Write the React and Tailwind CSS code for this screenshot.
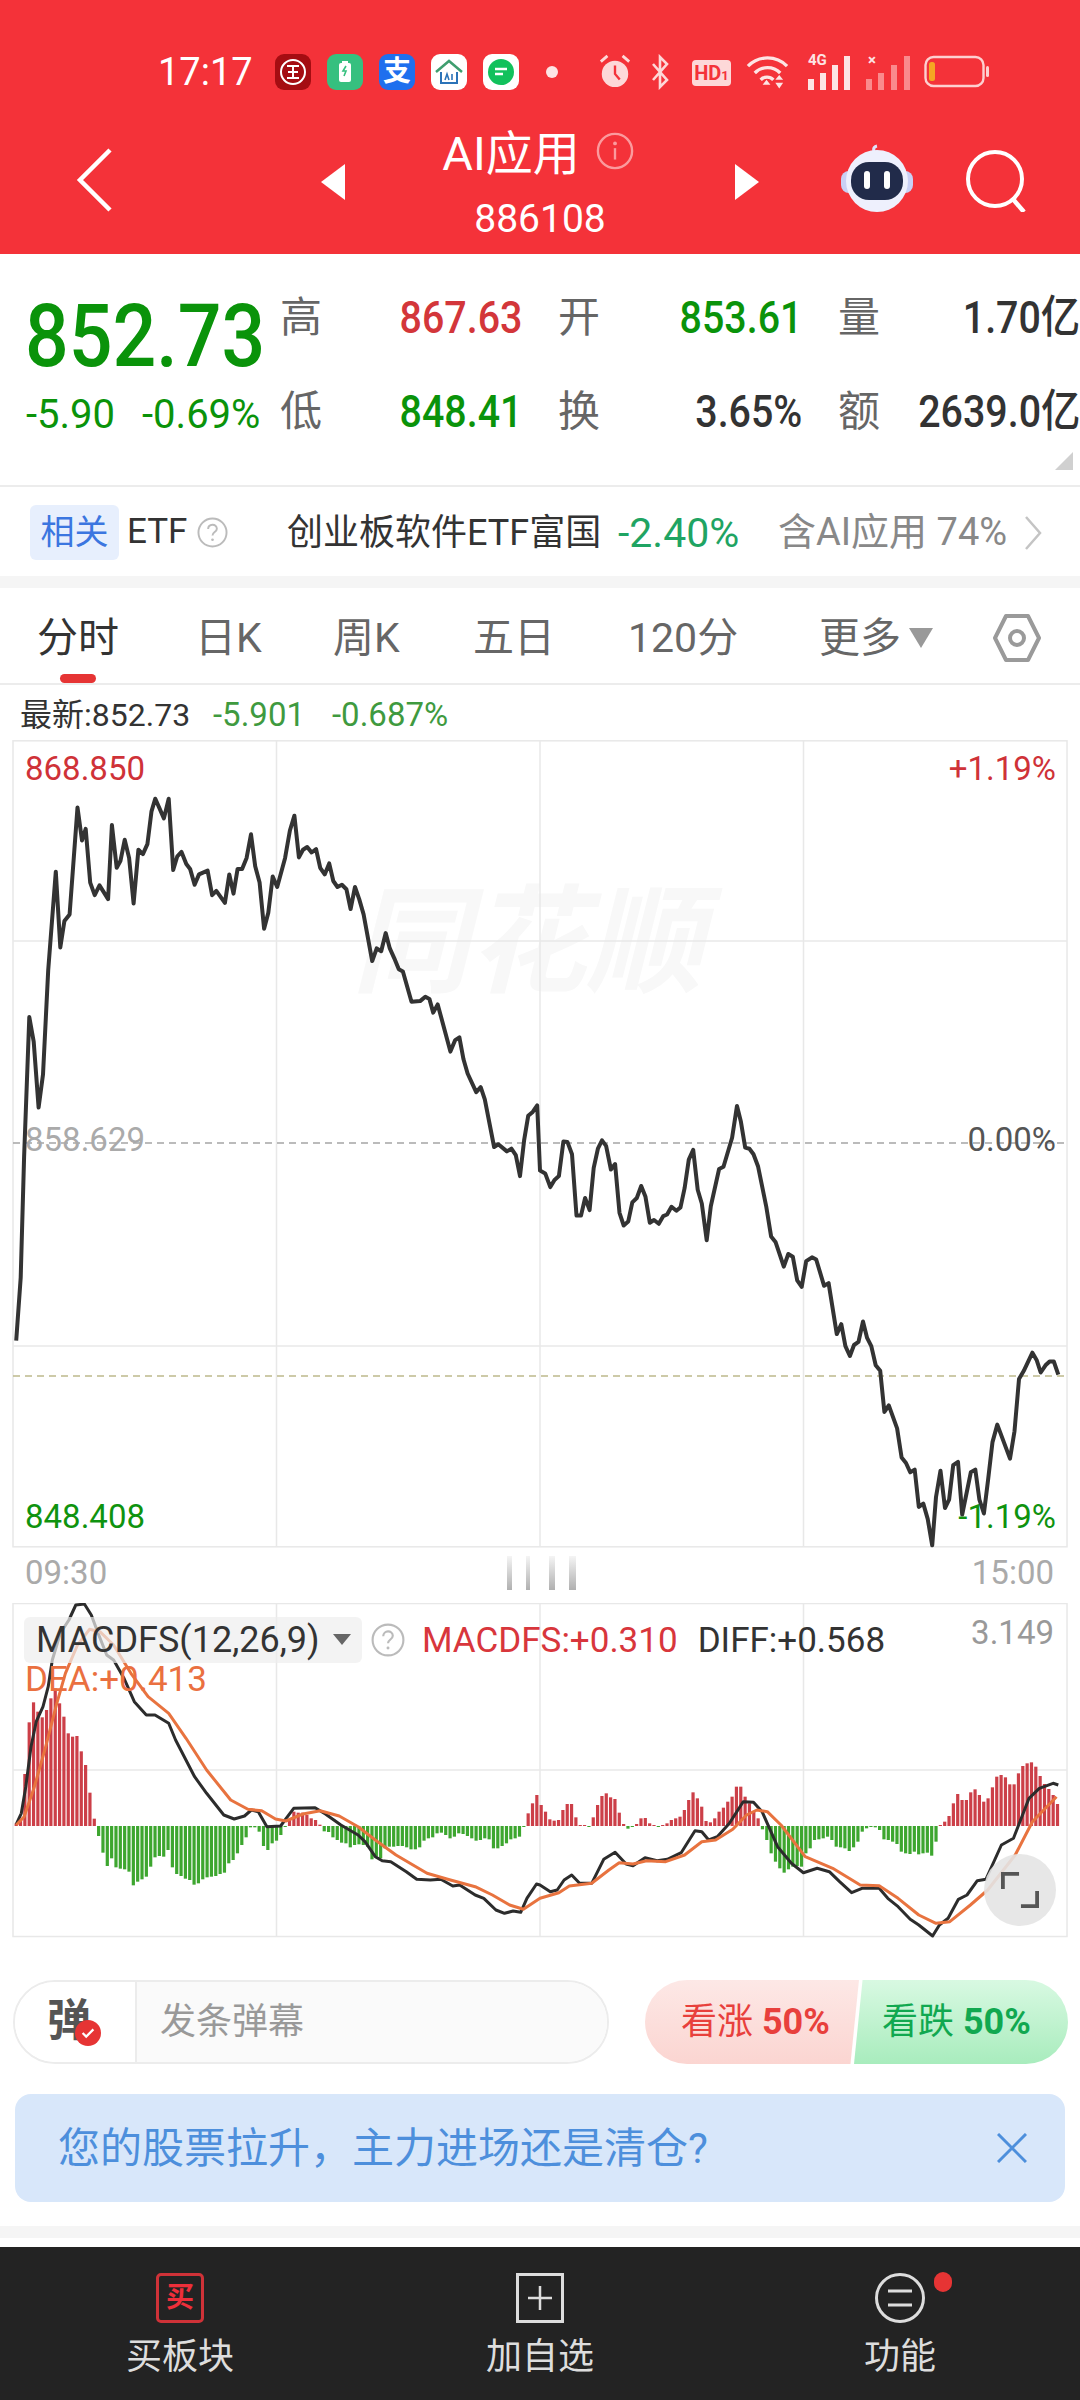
import React from "react";

const FONT = "font-['Roboto','Noto_Sans_CJK_SC',sans-serif]";

const L3 = [[47,1095],[60,980],[70,760],[85,505],[98,550],[112,670],[125,610],[140,420],[162,240],[175,378],[187,330],[202,318],[225,123],[238,183],[249,162],[262,260],[275,283],[289,265],[314,290],[325,155],[339,233],[350,220],[362,182],[375,215],[388,298],[402,200],[415,208],[428,190],[440,130],[451,107],[476,143],[490,107],[503,237],[515,212],[527,204],[541,226],[552,235],[565,264],[578,245],[603,238],[616,283],[628,275],[653,297],[666,245],[678,280],[690,235],[703,235],[716,215],[729,172],[741,230],[754,260],[767,344],[779,315],[792,249],[805,268],[828,215],[842,165],[855,138],[868,214],[880,200],[892,195],[905,205],[918,199],[930,233],[943,245],[956,225],[968,257],[980,268],[993,264],[1006,272],[1018,308],[1031,268],[1043,290],[1056,318],[1081,403],[1094,380],[1107,385],[1120,352],[1132,380],[1145,398],[1158,418],[1170,422],[1195,477],[1220,476],[1235,468],[1247,472],[1258,497],[1271,482],[1308,568],[1322,547],[1334,542],[1346,582],[1358,608],[1383,642],[1396,633],[1408,655],[1435,742],[1447,737],[1472,750],[1485,745],[1498,757],[1510,795],[1522,730],[1534,685],[1547,678],[1560,666]];
const L4 = [[0,785],[15,790],[30,815],[42,802],[55,795],[68,732],[80,733],[93,755],[106,867],[119,867],[131,835],[144,857],[156,780],[168,745],[180,730],[192,740],[206,783],[218,773],[231,862],[243,885],[256,878],[268,843],[281,835],[294,813],[306,832],[319,880],[331,875],[345,882],[358,868],[369,865],[382,851],[396,858],[408,852],[420,817],[432,765],[445,747],[458,820],[470,845],[484,912],[496,850],[520,782],[533,778],[558,725],[572,667],[583,695],[596,743],[608,745],[620,755],[633,777],[657,850],[671,905],[684,915],[708,960],[721,937],[734,942],[747,985],[760,997],[773,950],[790,943],[802,947],[825,995],[838,990],[862,1083],[875,1065],[887,1105],[900,1123],[912,1103],[925,1097],[938,1060],[950,1090],[962,1105],[975,1140],[988,1150],[1000,1225],[1013,1213],[1037,1255],[1050,1308],[1063,1318],[1075,1335],[1088,1330],[1100,1398],[1113,1392],[1126,1420],[1139,1468],[1150,1380],[1163,1332],[1176,1400],[1188,1385],[1200,1322],[1214,1316],[1226,1412],[1251,1335],[1264,1330],[1276,1385],[1289,1410],[1301,1350],[1314,1280],[1328,1248],[1365,1310],[1378,1260],[1391,1165],[1405,1150],[1430,1117],[1442,1130],[1454,1153],[1468,1140],[1480,1133],[1492,1133],[1505,1157]];
const K = 2.904;
const KY = 1.823;
const pricePts = [...L3.map(([x,y])=>[x/K,740+y/KY]),...L4.map(([x,y])=>[540+x/K,740+y/KY])].map(p=>p[0].toFixed(1)+","+p[1].toFixed(1)).join(" ");

const B5 = [[47,703],[62,670],[75,590],[90,470],[105,395],[125,350],[140,290],[152,210],[175,130],[200,90],[220,45],[245,42],[265,75],[285,130],[310,195],[330,210],[360,265],[390,335],[425,375],[450,375],[490,400],[510,450],[565,560],[600,610],[650,675],[680,687],[710,678],[730,660],[750,665],[775,710],[815,708],[835,680],[853,655],[915,653],[945,672],[990,705],[1040,735],[1060,755],[1090,800],[1110,812],[1135,815],[1180,845],[1210,868],[1250,870],[1280,868],[1315,888],[1335,885],[1380,915],[1405,925],[1440,960],[1465,970],[1490,963],[1512,967],[1530,925],[1558,882]];
const B6 = [[0,885],[30,905],[50,900],[70,870],[92,855],[115,880],[150,880],[185,808],[218,787],[250,822],[270,827],[305,803],[340,812],[370,808],[410,788],[450,722],[470,725],[490,750],[515,740],[550,700],[590,635],[620,637],[645,665],[690,770],[730,820],[765,848],[805,835],[840,845],[870,875],[905,908],[935,895],[985,895],[1010,925],[1040,950],[1075,988],[1100,1005],[1140,1038],[1160,1005],[1185,985],[1215,928],[1240,915],[1270,872],[1295,868],[1340,765],[1375,745],[1420,625],[1450,595],[1490,580],[1505,585]];
const O5 = [[47,705],[70,680],[100,590],[130,480],[165,340],[190,250],[225,165],[260,118],[290,125],[330,165],[380,250],[430,320],[490,370],[540,445],[600,540],[670,630],[720,658],[760,662],[800,687],[830,693],[880,672],[930,662],[985,678],[1040,710],[1090,750],[1150,795],[1240,850],[1300,868],[1380,890],[1430,915],[1480,945],[1520,958]];
const O6 = [[0,925],[55,908],[85,888],[150,880],[200,840],[230,818],[270,822],[310,812],[365,815],[420,795],[470,755],[510,750],[560,718],[600,675],[630,660],[660,665],[700,705],[770,800],[850,835],[930,885],[985,887],[1040,925],[1100,975],[1150,1000],[1190,995],[1250,945],[1300,900],[1380,795],[1430,695],[1500,620]];
const mac = (a,b)=>[...a.map(([x,y])=>[x/K,1590+y/3]),...b.map(([x,y])=>[540+x/K,1590+y/3])].map(p=>p[0].toFixed(1)+","+p[1].toFixed(1)).join(" ");

const TOPS = [700,690,552,397,337,365,382,360,325,295,340,380,430,440,438,484,525,608,686,738,788,828,805,832,836,838,845,886,875,868,860,830,802,798,800,780,832,852,858,866,870,884,880,868,862,860,858,852,848,820,810,790,765,742,712,712,725,768,780,760,752,735,710,690,665,668,668,675,685,690,704,724,726,742,750,758,760,772,765,763,765,770,808,800,805,775,770,770,768,768,772,778,778,772,752,745,742,730,728,735,745,740,730,732,738,745,752,750,745,748,775,775,768,760,748,745,740,710,670,640,615,645,665,688,692,690,660,642,642,682,706,706,709,682,645,618,610,622,627,668,702,716,710,702,685,684,700,705,709,706,700,690,685,680,660,630,607,625,650,693,697,685,665,653,635,620,590,590,620,640,665,685,718,750,790,815,835,848,838,830,828,830,790,775,750,748,745,740,750,770,772,775,783,772,755,725,715,710,712,720,748,750,755,762,785,790,792,785,793,790,788,797,755,705,695,678,640,612,630,630,607,598,615,635,625,592,560,555,562,583,583,550,528,520,517,530,558,582,597,615,642];

function PriceChart() {
  const vx = [276.5, 540, 803.5];
  return (
    <svg viewBox="0 740 1080 808" className="relative w-full h-full block">
      <rect x="13" y="740.8" width="1054" height="806" fill="none" stroke="#e8e8e8" strokeWidth="1.5" />
      {vx.map(x => <line key={x} x1={x} x2={x} y1="740" y2="1547" stroke="#e8e8e8" strokeWidth="1.5" />)}
      {[941, 1346].map(y => <line key={y} x1="13" x2="1067" y1={y} y2={y} stroke="#e8e8e8" strokeWidth="1.5" />)}
      <line x1="13" x2="1067" y1="1143" y2="1143" stroke="#a5a5a5" strokeWidth="1.5" strokeDasharray="7 5" />
      <line x1="13" x2="1067" y1="1376" y2="1376" stroke="#bdb98c" strokeWidth="1.5" strokeDasharray="7 5" />
      <polyline points={pricePts} fill="none" stroke="#333333" strokeWidth="4" strokeLinejoin="round" />
    </svg>
  );
}

function MacdChart() {
  const vx = [276.5, 540, 803.5];
  return (
    <svg viewBox="0 1603 1080 335" className="w-full h-full block">
      <rect x="13" y="1603.5" width="1054" height="333" fill="none" stroke="#e8e8e8" strokeWidth="1.5" />
      {vx.map(x => <line key={x} x1={x} x2={x} y1="1603" y2="1937" stroke="#e8e8e8" strokeWidth="1.5" />)}
      <line x1="13" x2="1067" y1="1770" y2="1770" stroke="#e8e8e8" strokeWidth="1.5" />
      {TOPS.map((t, i) => {
        const x = (47 + 12.6 * i) / K;
        const h = Math.max(Math.abs(t - 708) / 3, 1);
        const up = t < 708;
        return <rect key={i} x={x - 1.6} y={up ? 1826 - h : 1826} width="3.2" height={h} fill={up ? "#cc3f48" : "#3da62f"} />;
      })}
      <polyline points={mac(B5, B6)} fill="none" stroke="#2c2c2c" strokeWidth="3" strokeLinejoin="round" />
      <polyline points={mac(O5, O6)} fill="none" stroke="#e8733f" strokeWidth="3" strokeLinejoin="round" />
    </svg>
  );
}

function AppIcon({ cls, children }) {
  return <div className={"w-[36px] h-[36px] rounded-[9px] flex items-center justify-center overflow-hidden shrink-0 " + cls}>{children}</div>;
}

function StatusBar() {
  return (
    <div className="h-[144px] pt-[54px] pl-[158px] flex items-start text-white">
      <div className="w-[94px] h-[36px] text-[38px] leading-[36px] whitespace-nowrap">17:17</div>
      <div className="ml-[23px] flex gap-[16px]">
        <AppIcon cls="bg-[#a50d12]">
          <svg viewBox="0 0 36 36" className="w-[36px] h-[36px]"><circle cx="18" cy="18" r="12" fill="none" stroke="#fff" strokeWidth="2" /><path d="M12 12h12M18 12v12M12 24h12M13 18h10" stroke="#fff" strokeWidth="2" fill="none" /></svg>
        </AppIcon>
        <AppIcon cls="bg-[#36c07f]">
          <svg viewBox="0 0 36 36" className="w-[36px] h-[36px]"><rect x="12" y="9" width="12" height="19" rx="2" fill="#fff" /><rect x="15" y="7" width="6" height="3" fill="#fff" /><path d="M19 12l-3 5h3l-2 5" stroke="#36c07f" strokeWidth="1.6" fill="none" /></svg>
        </AppIcon>
        <AppIcon cls="bg-[#1f6fee] text-white text-[28px] leading-none font-bold">支</AppIcon>
        <AppIcon cls="bg-white">
          <svg viewBox="0 0 36 36" className="w-[36px] h-[36px]"><path d="M5 18L18 7l13 11" fill="none" stroke="#3f9e6f" strokeWidth="2.5" /><path d="M10 18v11h16V18" fill="none" stroke="#2b73b8" strokeWidth="2" /><path d="M14 26l2-6 2 6M21 20v6" fill="none" stroke="#2b73b8" strokeWidth="1.6" /></svg>
        </AppIcon>
        <AppIcon cls="bg-white">
          <svg viewBox="0 0 36 36" className="w-[36px] h-[36px]"><circle cx="18" cy="18" r="13" fill="#12c15c" /><path d="M12 15h12M12 20h8" stroke="#fff" strokeWidth="2.4" /></svg>
        </AppIcon>
      </div>
      <div className="ml-[27px] mt-[12px] w-[12px] h-[12px] rounded-full bg-[#fde4e4]" />
      <svg viewBox="0 0 36 40" className="ml-[40px] w-[34px] h-[38px] -mt-[1px] text-[#fdd8d8]">
        <circle cx="18" cy="22" r="14" fill="currentColor" />
        <path d="M18 13v9l5 6" stroke="#f43239" strokeWidth="2.5" fill="none" />
        <path d="M3 9l7-6M33 9l-7-6" stroke="currentColor" strokeWidth="3" />
      </svg>
      <svg viewBox="0 0 20 36" className="ml-[18px] w-[20px] h-[36px] mt-[0px]">
        <path d="M3 10l14 16-7 7V3l7 7L3 26" fill="none" stroke="#fdd8d8" strokeWidth="2.6" />
      </svg>
      <div className="ml-[22px] mt-[6px] w-[39px] h-[26px] rounded-[4px] bg-[#fdd8d8] text-[#f43239] text-[20px] leading-[26px] font-bold text-center overflow-hidden">HD<span className="text-[13px]">1</span></div>
      <svg viewBox="0 0 44 36" className="ml-[15px] w-[43px] h-[36px]">
        <path d="M2 12a28 28 0 0 1 40 0M9 19a18 18 0 0 1 26 0M15 26a9 9 0 0 1 13 0" fill="none" stroke="#fde4e4" strokeWidth="3.4" />
        <path d="M17 31h8l-4-5zM30 26h8l-4-5zM30 29h8l-4 6z" fill="#fde4e4" />
      </svg>
      <div className="ml-[19px] relative w-[43px] h-[36px] text-[#fde4e4]">
        <span className="absolute left-0 -top-[1px] text-[15px] leading-[15px] font-bold">4G</span>
        <svg viewBox="0 0 43 36" className="w-[43px] h-[36px]">
          <rect x="0" y="25" width="6" height="11" fill="currentColor" /><rect x="12" y="19" width="6" height="17" fill="currentColor" /><rect x="24" y="11" width="6" height="25" fill="currentColor" /><rect x="36" y="2" width="6" height="34" fill="currentColor" />
        </svg>
      </div>
      <div className="ml-[15px] relative w-[44px] h-[36px]">
        <span className="absolute left-[2px] -top-[1px] text-[15px] leading-[15px] font-bold text-[#fde4e4]">×</span>
        <svg viewBox="0 0 44 36" className="w-[44px] h-[36px]">
          <rect x="0" y="25" width="6" height="11" fill="#fa8a8d" /><rect x="12" y="19" width="6" height="17" fill="#fa8a8d" /><rect x="25" y="11" width="6" height="25" fill="#fa8a8d" /><rect x="38" y="2" width="6" height="34" fill="#fa8a8d" />
        </svg>
      </div>
      <svg viewBox="0 0 66 34" className="ml-[14px] mt-[1px] w-[66px] h-[34px]">
        <rect x="1.5" y="2" width="58" height="29" rx="8" fill="none" stroke="#fdd0d0" strokeWidth="2.4" />
        <rect x="5" y="7" width="6" height="19" rx="2.5" fill="#f5a623" />
        <rect x="62" y="11" width="3" height="11" rx="1.5" fill="#fdd0d0" />
      </svg>
    </div>
  );
}

function NavRow() {
  return (
    <div className="h-[110px] flex text-white">
      <svg viewBox="0 0 36 64" className="ml-[76px] mt-[4px] w-[36px] h-[64px]">
        <path d="M34 2L4 32l30 30" fill="none" stroke="#fff" strokeWidth="4.5" />
      </svg>
      <svg viewBox="0 0 24 36" className="ml-[209px] mt-[20px] w-[24px] h-[36px]"><path d="M24 0v36L0 18z" fill="#fff" /></svg>
      <div className="w-[390px] flex flex-col items-center -mt-[17px]">
        <div className="flex items-center h-[54px] -ml-[4px]">
          <span className="text-[47px] leading-[54px]">AI应用</span>
          <svg viewBox="0 0 40 40" className="ml-[16px] -mt-[6px] w-[38px] h-[38px]">
            <circle cx="20" cy="20" r="18" fill="none" stroke="#fb9a9d" strokeWidth="2.5" />
            <circle cx="20" cy="12" r="2" fill="#fb9a9d" /><path d="M20 17v12" stroke="#fb9a9d" strokeWidth="2.5" />
          </svg>
        </div>
        <span className="mt-[18px] text-[39px] leading-[40px]">886108</span>
      </div>
      <svg viewBox="0 0 24 36" className="mt-[20px] w-[24px] h-[36px]"><path d="M0 0v36l24-18z" fill="#fff" /></svg>
      <svg viewBox="0 0 74 70" className="ml-[81px] -mt-[1px] w-[74px] h-[70px]">
        <path d="M37 12c-4-2-5-8 0-9" fill="none" stroke="#dfe3fa" strokeWidth="3" />
        <rect x="1" y="28" width="72" height="22" rx="8" fill="#c9d0f5" />
        <ellipse cx="37" cy="38" rx="31" ry="31" fill="#eef0fd" />
        <rect x="11" y="19" width="52" height="38" rx="18" fill="#212b4a" />
        <rect x="24" y="28" width="6" height="18" rx="3" fill="#fff" />
        <rect x="44" y="28" width="6" height="18" rx="3" fill="#fff" />
      </svg>
      <svg viewBox="0 0 62 62" className="ml-[52px] mt-[6px] w-[62px] h-[62px]">
        <circle cx="29" cy="29" r="27" fill="none" stroke="#fff" strokeWidth="4" />
        <path d="M46 48l12 14" stroke="#fff" strokeWidth="4.5" fill="none" />
      </svg>
    </div>
  );
}

function Cond({ cls = "", origin = "origin-right", children }) {
  return <span className={"inline-block whitespace-nowrap scale-x-[.875] " + origin + " " + cls}>{children}</span>;
}

function Cell({ label, value, color }) {
  return (
    <div className="flex items-center justify-between h-[94px]">
      <span className="text-[42px] leading-[50px] text-[#666666]">{label}</span>
      <Cond cls={"text-[45px] leading-[50px] font-medium -mr-[2px] " + color}>{value}</Cond>
    </div>
  );
}

function Quote() {
  return (
    <div className="h-[231px] flex relative">
      <div className="w-[280px] pl-[25px] pt-[38px]">
        <div className="h-[88px]"><Cond origin="origin-left" cls="text-[88px] leading-[88px] font-medium text-[#0a930a]">852.73</Cond></div>
        <div className="mt-[13px] flex text-[40px] leading-[44px] text-[#0a930a]">
          <span className="ml-[1px]">-5.90</span>
          <span className="ml-[27px]">-0.69%</span>
        </div>
      </div>
      <div className="pt-[17px] grid grid-cols-[240px_242px_240px] gap-x-[38px] content-start">
        <Cell label="高" value="867.63" color="text-[#d3363a]" />
        <Cell label="开" value="853.61" color="text-[#0a930a]" />
        <Cell label="量" value="1.70亿" color="text-[#333333]" />
        <Cell label="低" value="848.41" color="text-[#0a930a]" />
        <Cell label="换" value="3.65%" color="text-[#333333]" />
        <Cell label="额" value="2639.0亿" color="text-[#333333]" />
      </div>
      <div className="absolute right-[7px] bottom-[15px] w-0 h-0 border-l-[18px] border-l-transparent border-b-[18px] border-b-[#d0d0d0]" />
    </div>
  );
}

function HelpIcon({ size, cls = "" }) {
  return (
    <svg viewBox="0 0 32 32" className={cls} style={{ width: size, height: size }}>
      <circle cx="16" cy="16" r="14.5" fill="none" stroke="#bbbbbb" strokeWidth="2" />
      <path d="M11.5 12.5c0-6 9-6 9-.5 0 3.500-4.500 3.500-4.500 7" fill="none" stroke="#bbbbbb" strokeWidth="2" />
      <circle cx="16" cy="23.500" r="1.400" fill="#bbbbbb" />
    </svg>
  );
}

function EtfRow() {
  return (
    <div className="h-[91px] border-t-[2px] border-[#ececec] flex items-center pl-[30px] pt-[2px] whitespace-nowrap">
      <div className="w-[89px] h-[55px] rounded-[6px] bg-[#e7effd] text-[#3b76e0] text-[34px] leading-[55px] text-center">相关</div>
      <span className="ml-[8px] w-[59px] text-[35px] text-[#333333]">ETF</span>
      <HelpIcon size={31} cls="ml-[11px]" />
      <span className="ml-[59px] w-[331px] text-[36px] text-[#333333]">创业板软件ETF富国</span>
      <span className="w-[160px] text-[41px] leading-[48px] text-[#1fa463]">-2.40%</span>
      <span className="w-[246px] text-[38px] text-[#888888]">含AI应用 74%</span>
      <svg viewBox="0 0 18 36" className="w-[18px] h-[36px]"><path d="M2 2l14 16L2 34" fill="none" stroke="#c4c4c4" strokeWidth="2.5" /></svg>
    </div>
  );
}

function Tabs() {
  return (
    <div className="h-[97px] border-b-[2px] border-[#ececec] relative flex items-center text-[41px] leading-[48px] text-[#666666] whitespace-nowrap pt-[4px]">
      <span className="ml-[37px] w-[158px] text-[#333333]">分时</span>
      <span className="w-[138px]">日K</span>
      <span className="w-[140px]">周K</span>
      <span className="w-[155px]">五日</span>
      <span className="w-[191px]">120分</span>
      <span className="w-[90px]">更多</span>
      <div className="w-0 h-0 border-x-[12px] border-x-transparent border-t-[20px] border-t-[#999999]" />
      <svg viewBox="0 0 48 50" className="ml-[60px] w-[48px] h-[50px]">
        <path d="M13 3h22l11 22-11 22H13L2 25z" fill="none" stroke="#9a9a9a" strokeWidth="4" strokeLinejoin="round" />
        <circle cx="24" cy="25" r="7" fill="none" stroke="#9a9a9a" strokeWidth="4" />
      </svg>
      <div className="absolute left-[60px] bottom-0 w-[36px] h-[9px] rounded-full bg-[#e63434]" />
    </div>
  );
}

function InfoRow() {
  return (
    <div className="h-[55px] pl-[20px] pt-[5px] flex items-center text-[32px] leading-[40px] whitespace-nowrap">
      <span className="w-[193px] text-[#333333]">最新:852.73</span>
      <span className="w-[119px] text-[33px] text-[#3f9a3f]">-5.901</span>
      <span className="text-[33px] text-[#3f9a3f]">-0.687%</span>
    </div>
  );
}

function BottomItem({ icon, label }) {
  return (
    <div className="w-[360px] flex flex-col items-center pt-[26px]">
      <div className="h-[50px] relative">{icon}</div>
      <span className="mt-[13px] text-[36px] leading-[42px] text-[#dddddd]">{label}</span>
    </div>
  );
}

export default function App() {
  return (
    <div className={"w-[1080px] h-[2400px] bg-white overflow-hidden flex flex-col " + FONT}>
      <div className="h-[254px] bg-[#f43239]">
        <StatusBar />
        <NavRow />
      </div>
      <Quote />
      <EtfRow />
      <div className="h-[12px] bg-[#f5f5f5]" />
      <Tabs />
      <InfoRow />

      <div className="h-[808px] relative">
        <div className="absolute left-[352px] top-[143px] text-[117px] leading-[120px] font-bold italic text-[#f8f8f8] whitespace-nowrap">同花顺</div>
        <PriceChart />
        <div className="absolute inset-x-0 top-[9px] pl-[25px] pr-[24px] flex justify-between text-[33px] leading-[40px] text-[#cf3238]"><span>868.850</span><span>+1.19%</span></div>
        <div className="absolute inset-x-0 top-[380px] pl-[25px] pr-[24px] flex justify-between text-[33px] leading-[40px]"><span className="text-[#aaaaaa]">858.629</span><span className="text-[#555555]">0.00%</span></div>
        <div className="absolute inset-x-0 top-[757px] pl-[25px] pr-[24px] flex justify-between text-[33px] leading-[40px] text-[#0f930f]"><span>848.408</span><span>-1.19%</span></div>
      </div>

      <div className="h-[55px] pl-[25px] pr-[26px] pb-[6px] flex items-center justify-between text-[33px] leading-[40px] text-[#aaaaaa]">
        <span>09:30</span>
        <div className="w-[100px] h-[38px] flex items-center justify-center ml-[4px] gap-[14px]">
          <div className="w-[5px] h-[34px] bg-gradient-to-b from-[#f5f5f5] to-[#b0b0b0]" />
          <div className="w-[4px] h-[34px] bg-gradient-to-b from-[#f5f5f5] to-[#b0b0b0]" />
          <div className="w-[6px] h-[34px] ml-[5px] bg-gradient-to-b from-[#f5f5f5] to-[#b0b0b0]" />
          <div className="w-[7px] h-[34px] bg-gradient-to-b from-[#f5f5f5] to-[#b0b0b0]" />
        </div>
        <span>15:00</span>
      </div>

      <div className="h-[335px] relative">
        <MacdChart />
        <div className="absolute left-[24px] top-[12px] flex items-center whitespace-nowrap text-[35px] leading-[46px]">
          <div className="w-[338px] h-[46px] pl-[12px] rounded-[6px] bg-[#eeeeee]/70 flex items-center text-[36px] text-[#333333]">
            <span>MACDFS(12,26,9)</span>
            <div className="ml-[13px] w-0 h-0 border-x-[9px] border-x-transparent border-t-[11px] border-t-[#666666]" />
          </div>
          <HelpIcon size={34} cls="ml-[9px]" />
          <span className="ml-[17px] text-[#d8363c] pt-[3px]">MACDFS:+0.310</span>
          <span className="ml-[20px] text-[#333333] pt-[3px]">DIFF:+0.568</span>
        </div>
        <div className="absolute right-[26px] top-[7px] text-[33px] leading-[46px] text-[#999999]">3.149</div>
        <div className="absolute left-[25px] top-[54px] text-[35px] leading-[46px] text-[#ea7040]">DEA:+0.413</div>
        <div className="absolute left-[984px] top-[251px] w-[72px] h-[72px] rounded-full bg-[#e4e4e4]/90 flex items-center justify-center">
          <svg viewBox="0 0 40 40" className="w-[38px] h-[38px]">
            <path d="M2 19V3h17M38 21v16H21" fill="none" stroke="#555555" strokeWidth="4" />
          </svg>
        </div>
      </div>

      <div className="mt-[42px] h-[84px] pl-[13px] flex">
        <div className="w-[596px] h-[84px] rounded-full border-[2px] border-[#ececec] flex overflow-hidden">
          <div className="w-[122px] relative border-r-[2px] border-[#ececec] bg-white">
            <span className="absolute left-[32px] top-[14px] text-[44px] leading-[50px] font-bold text-[#555555]">弹</span>
            <div className="absolute left-[60px] top-[38px] w-[26px] h-[26px] rounded-full bg-[#e63434] flex items-center justify-center">
              <svg viewBox="0 0 20 20" className="w-[18px] h-[18px]"><path d="M4 10l4 4 8-8" fill="none" stroke="#fff" strokeWidth="2.500" /></svg>
            </div>
          </div>
          <div className="flex-1 bg-[#fafafa] pl-[23px] flex items-center text-[36px] text-[#999999]">发条弹幕</div>
        </div>
        <div className="ml-[36px] relative w-[423px] h-[84px] text-[36px] leading-[84px] whitespace-nowrap">
          <div className="absolute left-0 top-0 h-full w-[214px] rounded-l-full bg-gradient-to-b from-[#fde8e6] to-[#fbd5d1] [clip-path:polygon(0_0,100%_0,96%_100%,0_100%)] pl-[36px] text-[#e8403c]">
            看涨 <span className="font-bold">50%</span>
          </div>
          <div className="absolute right-0 top-0 h-full w-[214px] rounded-r-full bg-gradient-to-b from-[#d8f9e2] to-[#a8ecbd] [clip-path:polygon(4%_0,100%_0,100%_100%,0_100%)] pl-[28px] text-[#11a850]">
            看跌 <span className="font-bold">50%</span>
          </div>
        </div>
      </div>

      <div className="mt-[30px] mx-[15px] h-[108px] rounded-[16px] bg-[#d8e7fa] pl-[43px] pr-[38px] flex items-center justify-between">
        <span className="text-[42px] text-[#4d8fdc] whitespace-nowrap">您的股票拉升，主力进场还是清仓?</span>
        <svg viewBox="0 0 30 30" className="w-[30px] h-[30px]"><path d="M1 1l28 28M29 1L1 29" stroke="#4d8fdc" strokeWidth="3" /></svg>
      </div>

      <div className="mt-[24px] h-[12px] bg-[#f5f5f5]" />
      <div className="h-[9px]" />

      <div className="flex-1 bg-[#232323] flex">
        <BottomItem label="买板块" icon={
          <div className="w-[48px] h-[50px] rounded-[5px] border-[3px] border-[#cf3238] text-[#ee2f3a] text-[28px] leading-[44px] font-bold text-center">买</div>
        } />
        <BottomItem label="加自选" icon={
          <svg viewBox="0 0 48 50" className="w-[48px] h-[50px]"><rect x="1.500" y="1.500" width="45" height="47" fill="none" stroke="#dddddd" strokeWidth="3" /><path d="M24 13v24M12 25h24" stroke="#dddddd" strokeWidth="2.500" /></svg>
        } />
        <BottomItem label="功能" icon={
          <>
            <svg viewBox="0 0 50 50" className="w-[50px] h-[50px]"><circle cx="25" cy="25" r="23.500" fill="none" stroke="#dddddd" strokeWidth="3" /><path d="M13 18h24M13 32h24" stroke="#dddddd" strokeWidth="3" /></svg>
            <div className="absolute left-[59px] -top-[1px] w-[18px] h-[20px] rounded-full bg-[#e63434]" />
          </>
        } />
      </div>
    </div>
  );
}
